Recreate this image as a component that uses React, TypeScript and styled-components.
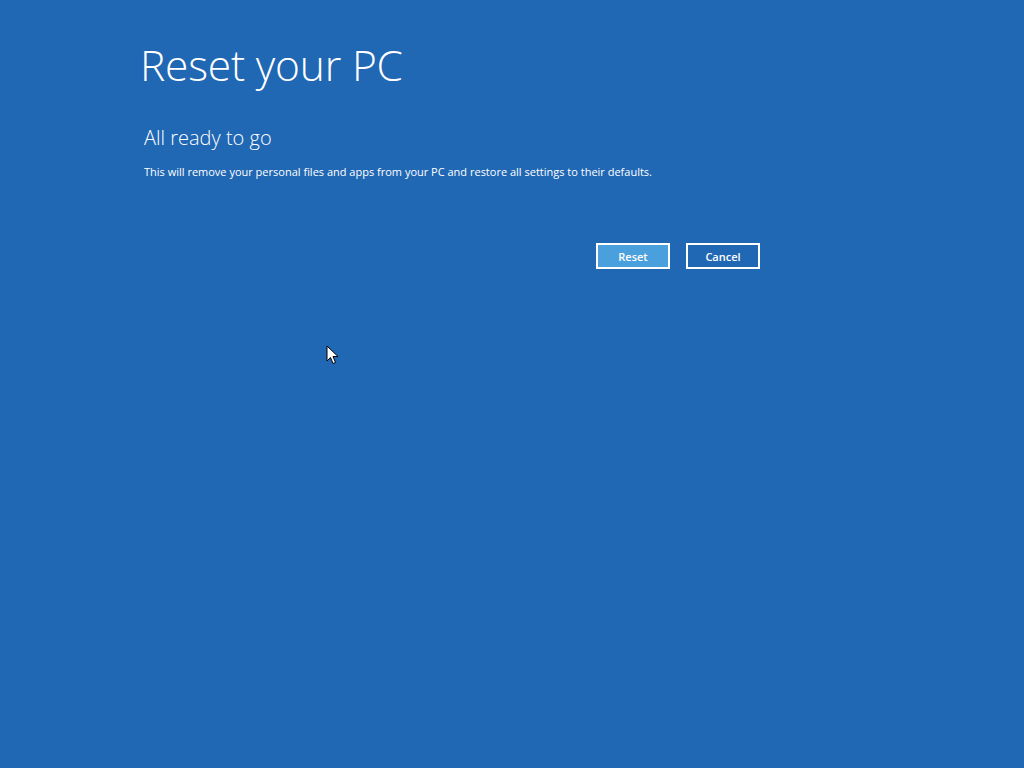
import React from "react";
import styled, { createGlobalStyle } from "styled-components";

const Global = createGlobalStyle`
  html, body { margin: 0; padding: 0; background: #2067b4; }
  body { font-family: "Open Sans", "Noto Sans", sans-serif; }
`;

const Screen = styled.div`
  position: relative;
  width: 1024px;
  height: 768px;
  background: #2067b4;
  color: #ffffff;
  overflow: hidden;
`;

const Content = styled.div`
  width: 620px;
  margin-left: 140px;
  padding-top: 35px;
  display: flex;
  flex-direction: column;
`;

const Title = styled.h1`
  margin: 0;
  font-family: "Open Sans", sans-serif;
  font-weight: 300;
  font-size: 42.5px;
  line-height: 60px;
  letter-spacing: -0.2px;
`;

const Subtitle = styled.h2`
  margin: 30px 0 0 4px;
  font-family: "Open Sans", sans-serif;
  font-weight: 300;
  font-size: 20px;
  line-height: 26px;
`;

const Body = styled.p`
  margin: 13px 0 0 4px;
  font-family: "Open Sans", sans-serif;
  font-size: 11px;
  line-height: 16px;
`;

const Buttons = styled.div`
  display: flex;
  justify-content: flex-end;
  gap: 16px;
  margin-top: 63px;
`;

const Button = styled.button<{ $primary?: boolean }>`
  width: 74px;
  height: 26px;
  box-sizing: border-box;
  border: 2px solid #ffffff;
  background: ${(p) => (p.$primary ? "#4aa0dc" : "#2067b4")};
  color: #ffffff;
  font-family: "Open Sans", sans-serif;
  font-weight: 600;
  font-size: 11px;
  padding: 0;
  cursor: default;
`;

const Cursor = styled.svg`
  position: absolute;
  left: 326px;
  top: 345px;
`;

export default function App() {
  return (
    <Screen>
      <Global />
      <Content>
        <Title>Reset your PC</Title>
        <Subtitle>All ready to go</Subtitle>
        <Body>
          This will remove your personal files and apps from your PC and restore all settings to their defaults.
        </Body>
        <Buttons>
          <Button $primary>Reset</Button>
          <Button>Cancel</Button>
        </Buttons>
      </Content>
      <Cursor width="14" height="20" viewBox="0 0 14 20">
        <path d="M1 1 L1 16 L4.5 12.5 L7 18.5 L9.5 17.5 L7 11.5 L12 11.5 Z" fill="#fff" stroke="#000" strokeWidth="1" />
      </Cursor>
    </Screen>
  );
}
